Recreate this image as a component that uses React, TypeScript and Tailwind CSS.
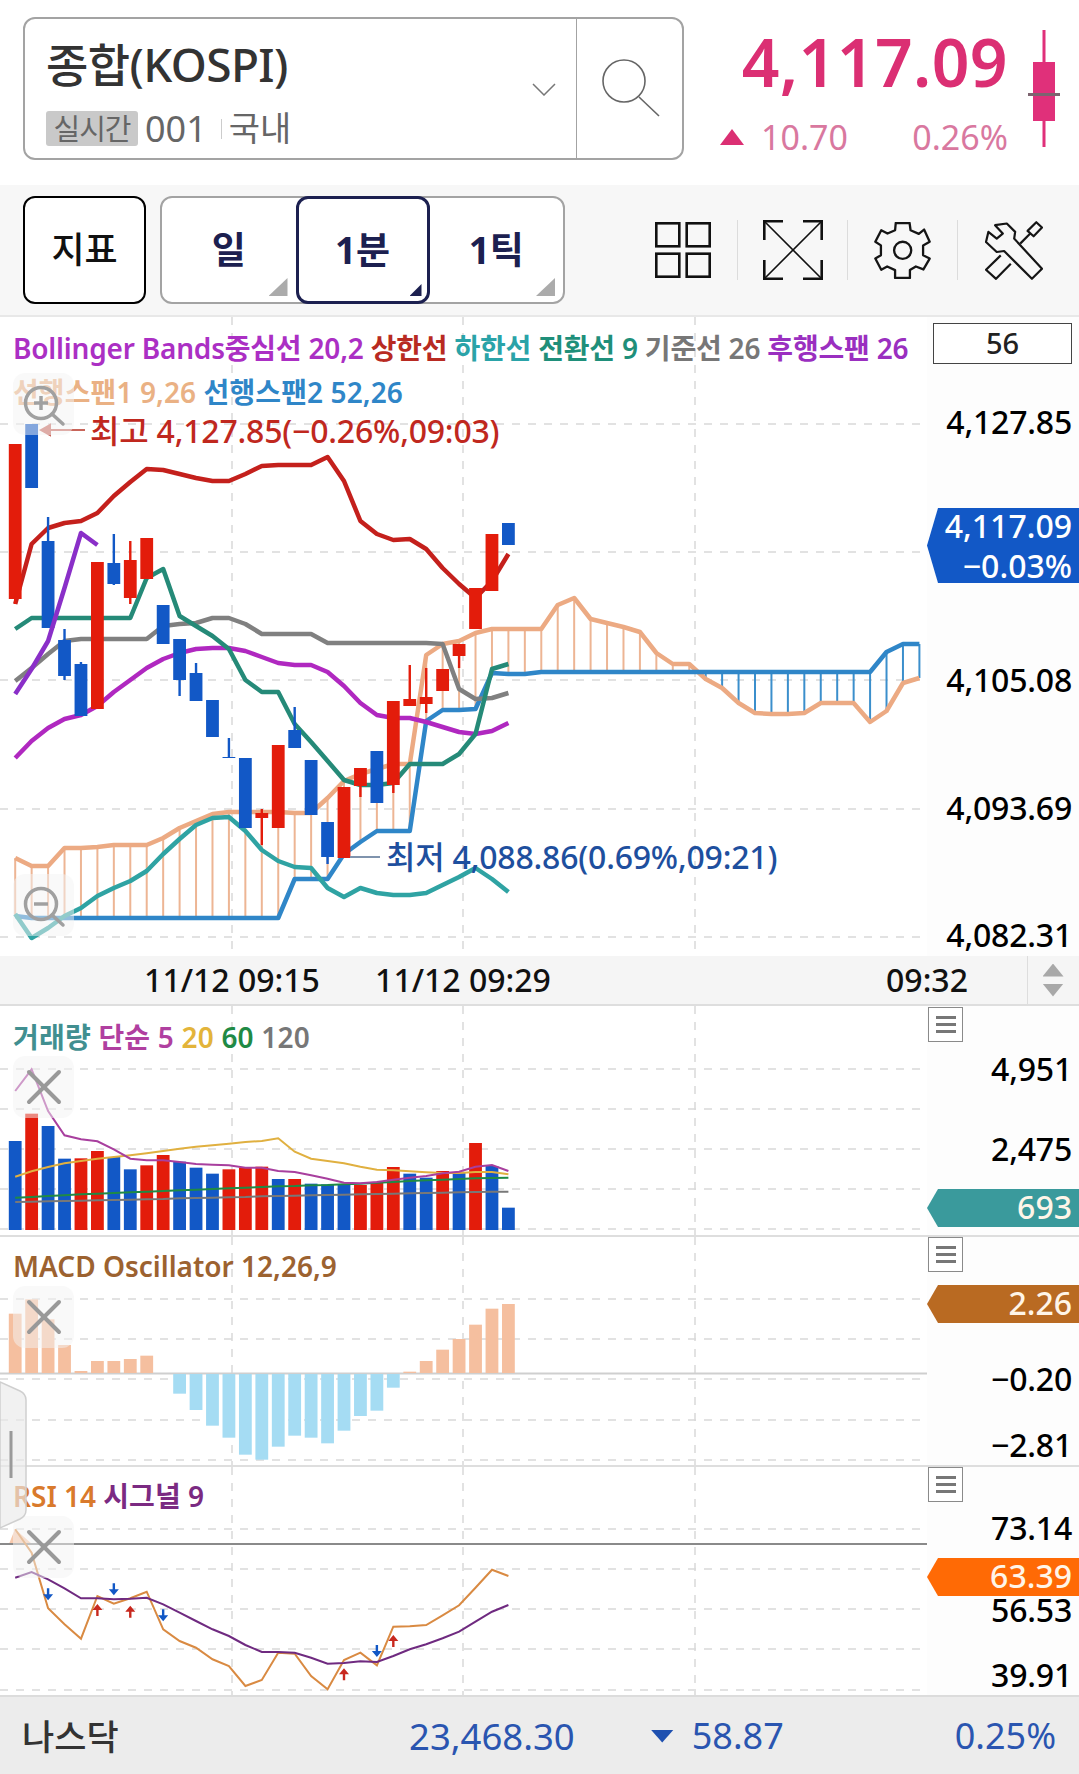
const RED = "#e31c0b";
const BLUE = "#1258c6";
const X = (i: number) => 15.2 + 16.44 * i;

// zoom-space y -> page y
const pts = (ys: number[], f: (y: number) => number = (y) => y) =>
  ys.map((y, i) => `${X(i).toFixed(1)},${f(y).toFixed(1)}`).join(" ");

// [color, bodyTop, bodyBottom, wickTop, wickBottom]
const candles: [string, number, number, number, number][] = [
  [RED, 443, 598, 443, 603],
  [BLUE, 423, 487, 423, 487],
  [BLUE, 540, 627, 516, 627],
  [BLUE, 639, 675, 628, 679],
  [BLUE, 663, 715, 661, 715],
  [RED, 561, 708, 561, 708],
  [BLUE, 562, 583, 533, 584],
  [RED, 559, 597, 540, 603],
  [RED, 537, 578, 537, 578],
  [BLUE, 604, 643, 604, 643],
  [BLUE, 638, 679, 638, 695],
  [BLUE, 672, 700, 662, 700],
  [BLUE, 699, 736, 699, 736],
  [BLUE, 756, 757, 737, 757],
  [BLUE, 757, 827, 757, 827],
  [RED, 812, 817, 808, 844],
  [RED, 744, 827, 744, 827],
  [BLUE, 729, 747, 706, 747],
  [BLUE, 759, 814, 759, 814],
  [BLUE, 821, 856, 821, 863],
  [RED, 786, 857, 786, 857],
  [RED, 767, 785, 767, 796],
  [BLUE, 750, 802, 750, 802],
  [RED, 700, 784, 700, 792],
  [RED, 698, 705, 664, 705],
  [RED, 696, 703, 667, 712],
  [RED, 668, 690, 668, 690],
  [RED, 643, 655, 643, 667],
  [RED, 587, 628, 587, 628],
  [RED, 533, 590, 533, 590],
  [BLUE, 522, 544, 522, 544],
];

const upper = [603, 543, 527, 522, 520, 512, 495, 481, 468, 469, 473, 477, 480, 480, 473, 465, 464, 464, 464, 456, 480, 520, 533, 539, 538, 548, 567, 583, 597, 580, 553];
const lagging = [693, 668, 640, 587, 532, 544];
const middle = [757, 740, 727, 718, 714, 705, 691, 679, 667, 658, 652, 648, 647, 647, 650, 656, 662, 664, 664, 671, 685, 702, 714, 717, 717, 721, 726, 731, 733, 730, 722];
const conv = [628, 617, 617, 617, 617, 617, 617, 617, 577, 568, 615, 625, 635, 648, 679, 691, 691, 723, 741, 760, 779, 784, 784, 782, 763, 763, 763, 753, 733, 668, 663];
const base = [680, 667, 653, 640, 638, 638, 638, 638, 638, 625, 623, 622, 617, 617, 623, 633, 633, 633, 633, 642, 642, 642, 642, 642, 642, 642, 643, 688, 698, 697, 692];
const lower = [913, 937, 927, 915, 907, 895, 887, 880, 870, 853, 838, 824, 817, 816, 830, 849, 860, 866, 867, 887, 896, 887, 892, 894, 894, 892, 884, 876, 867, 878, 891];
const span1 = [857, 865, 865, 847, 847, 846, 844, 844, 844, 837, 827, 820, 813, 811, 811, 811, 811, 812, 812, 797, 780, 773, 768, 763, 763, 654, 643, 640, 632, 628, 628, 628, 628, 604, 597, 618, 622, 626, 631, 652, 663, 663, 678, 687, 702, 712, 713, 713, 712, 702, 702, 702, 721, 710, 682, 677];
const span2 = [915, 917, 917, 917, 917, 917, 917, 917, 917, 917, 917, 917, 917, 917, 917, 917, 917, 878, 878, 878, 853, 841, 830, 830, 830, 720, 709, 709, 708, 672, 673, 673, 671, 671, 671, 671, 671, 671, 671, 671, 671, 671, 671, 671, 671, 671, 671, 671, 671, 671, 671, 671, 671, 651, 643, 643];

const volTops = [420, 338, 375, 473, 472, 450, 468, 505, 493, 462, 482, 500, 518, 505, 500, 497, 534, 534, 548, 550, 552, 552, 544, 498, 518, 530, 510, 515, 426, 495, 620];
const volUp = [1, 4, 5, 8, 9, 13, 14, 15, 17, 21, 22, 23, 26, 28];
const volPink = [270, 205, 330, 403, 415, 421, 445, 473, 478, 478, 483, 489, 491, 493, 500, 500, 510, 513, 523, 533, 545, 547, 543, 536, 530, 525, 517, 512, 497, 492, 510];
const volYellow = [527, 511, 498, 487, 480, 473, 468, 463, 457, 450, 443, 437, 433, 428, 423, 420, 412, 452, 473, 480, 487, 497, 506, 508, 511, 514, 516, 516, 513, 513, 520];
const volGreen = [590, 588, 585, 583, 580, 578, 576, 574, 572, 570, 568, 566, 564, 562, 560, 558, 556, 555, 553, 552, 550, 548, 545, 543, 540, 538, 536, 534, 532, 531, 530];
const volGray = [603, 602, 601, 600, 599, 598, 597, 596, 595, 594, 592, 591, 590, 589, 588, 586, 585, 584, 583, 582, 581, 580, 579, 578, 577, 576, 575, 574, 573, 572, 572];

const macd = [218, 175, 235, 312, 390, 360, 360, 354, 344, 396, 458, 507, 554, 590, 641, 656, 617, 584, 590, 607, 569, 525, 509, 440, 392, 360, 326, 294, 251, 203, 189];

const rsi = [175, 245, 412, 460, 503, 375, 398, 382, 362, 475, 510, 530, 565, 585, 645, 627, 545, 548, 615, 655, 567, 545, 583, 467, 466, 462, 433, 403, 350, 296, 315];
const signal = [320, 303, 325, 352, 382, 382, 385, 383, 380, 400, 425, 450, 475, 495, 522, 543, 543, 545, 560, 578, 576, 571, 573, 555, 535, 520, 502, 482, 452, 422, 402];
const rsiArrows: [number, number, boolean][] = [
  [2, 370, false],
  [6, 355, false],
  [9, 433, false],
  [22, 540, false],
  [5, 417, true],
  [7, 422, true],
  [20, 610, true],
  [23, 510, true],
];

const GridLines = ({ top, h, ys }: { top: number; h: number; ys: number[] }) => (
  <g stroke="#d9d9d9" strokeWidth="1.5" strokeDasharray="8 8">
    {ys.map((y) => (
      <line key={y} x1="0" x2="927" y1={y} y2={y} />
    ))}
    {[232, 463, 695].map((x) => (
      <line key={x} x1={x} x2={x} y1={top} y2={top + h} />
    ))}
  </g>
);

const AxisLabel = ({ y, text }: { y: number; text: string }) => (
  <div
    className="absolute right-[7px] text-[32px] leading-[40px] font-medium tracking-[-0.2px] text-black"
    style={{ top: y - 22 }}
  >
    {text}
  </div>
);

const AxisBadge = ({ y, h, color, text }: { y: number; h: number; color: string; text: string }) => (
  <div
    className="absolute left-0 w-full flex items-center justify-end pb-[2px] pr-[7px] text-[32px] font-medium text-[#fff5e8] [clip-path:polygon(11px_0,100%_0,100%_100%,11px_100%,0_50%)]"
    style={{ top: y, height: h, backgroundColor: color }}
  >
    {text}
  </div>
);

const MenuBtn = ({ top = "top-0" }: { top?: string }) => (
  <div className={`absolute left-[1px] ${top} z-10 flex h-[35px] w-[35px] flex-col items-center justify-center gap-[4px] border border-[#8a8a8a] bg-white`}>
    <div className="h-[3px] w-[20px] bg-[#777]" />
    <div className="h-[3px] w-[20px] bg-[#777]" />
    <div className="h-[3px] w-[20px] bg-[#777]" />
  </div>
);

const CloseBtn = ({ top }: { top: string }) => (
  <div className={`absolute left-[13px] ${top} flex h-[62px] w-[61px] items-center justify-center rounded-xl bg-[#f4f4f4]/50`}>
    <svg width="36" height="36" viewBox="0 0 36 36" stroke="#999" strokeWidth="4" strokeLinecap="round">
      <line x1="3" y1="3" x2="33" y2="33" />
      <line x1="33" y1="3" x2="3" y2="33" />
    </svg>
  </div>
);

const ZoomBtn = ({ top, plus }: { top: string; plus?: boolean }) => (
  <div className={`absolute left-[13px] ${top} h-[62px] w-[61px] rounded-xl bg-[#f4f4f4]/50`}>
    <svg width="61" height="62" viewBox="0 0 61 62" fill="none" stroke="#a0a0a0" strokeWidth="3.5">
      <circle cx="28" cy="30" r="15.5" />
      <line x1="39" y1="41" x2="50" y2="51" strokeLinecap="round" />
      <line x1="21" y1="30" x2="35" y2="30" />
      {plus && <line x1="28" y1="23" x2="28" y2="37" />}
    </svg>
  </div>
);

const ToolTab = ({ label, active }: { label: string; active?: boolean }) => (
  <div
    className={
      active
        ? "relative flex h-[108px] w-[134px] items-center justify-center rounded-xl border-[3px] border-[#1c2050] bg-white"
        : "relative flex h-full w-[134px] items-center justify-center"
    }
  >
    <span className="text-[37px] font-bold text-[#1c2050]">{label}</span>
    {active ? (
      <div className="absolute bottom-[5px] right-[5px] h-[12px] w-[12px] bg-[#1c2050] [clip-path:polygon(100%_0,100%_100%,0_100%)]" />
    ) : (
      <div className="absolute bottom-[6px] right-[8px] h-[18px] w-[19px] bg-[#ababab] [clip-path:polygon(100%_0,100%_100%,0_100%)]" />
    )}
  </div>
);

export default function App() {
  return (
    <div className="relative h-[1774px] w-[1079px] overflow-hidden bg-white font-['Noto_Sans','Noto_Sans_CJK_KR',sans-serif]">
      {/* header */}
      <div className="flex h-[185px] pl-[23px] pt-[17px]">
        <div className="flex h-[143px] w-[661px] rounded-xl border-2 border-[#a3a3a3]">
          <div className="relative flex-1 pl-[21px] pt-[15px]">
            <div className="text-[46px] font-medium leading-[60px] tracking-[-0.6px] text-[#333]">종합(KOSPI)</div>
            <div className="mt-[17px] flex items-center text-[#666]">
              <span className="flex h-[35px] w-[92px] items-center justify-center rounded-[3px] bg-[#c9c9c9] text-[29px] tracking-[-1px]">실시간</span>
              <span className="ml-[7px] text-[36px] leading-[35px]">001</span>
              <span className="ml-[14px] h-[20px] w-px bg-[#ccc]" />
              <span className="ml-[7px] text-[34px] leading-[35px]">국내</span>
            </div>
            <svg className="absolute right-[20px] top-[64px]" width="24" height="13" viewBox="0 0 24 13" fill="none" stroke="#777" strokeWidth="1.5">
              <path d="M1 1 L12 12 L23 1" />
            </svg>
          </div>
          <div className="flex w-[106px] items-center justify-center border-l border-[#a3a3a3] pl-[5px]">
            <svg width="62" height="62" viewBox="0 0 62 62" fill="none" stroke="#666" strokeWidth="1.6">
              <circle cx="23" cy="23" r="21" />
              <line x1="38" y1="39" x2="58" y2="58" />
            </svg>
          </div>
        </div>
        <div className="ml-[36px] w-[288px] pt-[4px] text-right">
          <div className="text-[66px] font-semibold leading-[80px] tracking-[0.4px] text-[#db2f73]">4,117.09</div>
          <div className="mt-[11px] flex items-center text-[34px] leading-[50px] text-[#d9789f]">
            <span className="h-[16px] w-[24px] bg-[#db2f73] [clip-path:polygon(50%_0,100%_100%,0_100%)]" />
            <span className="ml-[17px]">10.70</span>
            <span className="ml-auto">0.26%</span>
          </div>
        </div>
        <div className="relative ml-[20px] h-[142px] w-[32px]">
          <svg width="32" height="120" viewBox="0 0 32 120" className="mt-[13px]">
            <rect x="14.5" y="0" width="3" height="117" fill="#e0307a" />
            <rect x="5" y="32" width="22" height="59" fill="#e0307a" />
            <rect x="0" y="63" width="32" height="3" fill="#7d6470" />
          </svg>
        </div>
      </div>

      {/* toolbar */}
      <div className="flex h-[132px] items-center border-b-2 border-[#e8e8e8] bg-[#f7f7f7] pl-[23px]">
        <div className="flex h-[108px] w-[123px] items-center justify-center rounded-xl border-2 border-black bg-white text-[36px] font-medium text-[#111]">지표</div>
        <div className="ml-[14px] flex h-[108px] w-[405px] rounded-xl border-2 border-[#a3a3a3] bg-white">
          <ToolTab label="일" />
          <div className="-my-[2px]">
            <ToolTab label="1분" active />
          </div>
          <ToolTab label="1틱" />
        </div>
        <svg className="ml-[90px]" width="56" height="56" viewBox="0 0 56 56" fill="none" stroke="#111" strokeWidth="2.6">
          <rect x="1.3" y="1.3" width="23" height="23" />
          <rect x="31.7" y="1.3" width="23" height="23" />
          <rect x="1.3" y="31.7" width="23" height="23" />
          <rect x="31.7" y="31.7" width="23" height="23" />
        </svg>
        <div className="ml-[26px] h-[60px] w-px bg-[#dcdcdc]" />
        <svg className="ml-[25px]" width="60" height="60" viewBox="0 0 60 60" fill="none" stroke="#111">
          <path strokeWidth="2.6" d="M20 1.3 H1.3 V20 M40 1.3 H58.7 V20 M1.3 40 V58.7 H20 M58.7 40 V58.7 H40" />
          <path strokeWidth="1.6" d="M1.3 1.3 L58.7 58.7 M58.7 1.3 L1.3 58.7" />
        </svg>
        <div className="ml-[24px] h-[60px] w-px bg-[#dcdcdc]" />
        <svg className="ml-[26px]" width="57" height="57" viewBox="42 37 171 173" fill="none" stroke="#151515" strokeWidth="7" strokeLinejoin="round">
          <path d="M107 40 H149 L152 62 L177 73 L193 60 L210 97 L190 108 V138 L210 148 L191 181 L168 172 L150 183 V207 H105 V183 L81 172 L63 182 L45 148 L62 138 V108 L45 97 L63 62 L82 72 L105 62 Z" />
          <circle cx="128" cy="123" r="26" />
        </svg>
        <div className="ml-[26px] h-[60px] w-px bg-[#dcdcdc]" />
        <svg className="ml-[27px]" width="58" height="59" viewBox="375 33 173 175" fill="none" stroke="#151515" strokeWidth="6.5" strokeLinejoin="round">
          <path d="M405 45 L440 40 L465 65 L462 85 L545 175 L515 205 L432 122 L410 125 L378 95 L385 65 L410 85 L428 70 Z" />
          <path d="M422 135 L378 178 L408 205 L452 160" />
          <path d="M480 100 L510 70" />
          <path d="M502 62 L528 36 L545 52 L520 78 Z" />
        </svg>
      </div>

      {/* price chart */}
      <div className="flex h-[639px]">
        <div className="relative w-[927px]">
          <svg className="absolute inset-0" width="927" height="639" viewBox="0 316 927 639">
            <GridLines top={316} h={639} ys={[423, 551, 679, 808, 936]} />
            {span1.map((y, i) => (
              <line key={i} x1={X(i)} x2={X(i)} y1={y} y2={span2[i]} stroke={i < 42 ? "#edb594" : "#3b8fcc"} strokeWidth="2" />
            ))}
            <polyline points={pts(span1)} fill="none" stroke="#ecaa83" strokeWidth="4.5" strokeLinejoin="round" />
            <polyline points={pts(span2)} fill="none" stroke="#2f86c8" strokeWidth="4.5" strokeLinejoin="round" />
            <polyline points={pts(upper)} fill="none" stroke="#c4201c" strokeWidth="4.5" strokeLinejoin="round" />
            <polyline points={pts(middle)} fill="none" stroke="#b028c0" strokeWidth="4.5" strokeLinejoin="round" />
            <polyline points={pts(lower)} fill="none" stroke="#2fa3a3" strokeWidth="4.5" strokeLinejoin="round" />
            <polyline points={pts(base)} fill="none" stroke="#808080" strokeWidth="4.5" strokeLinejoin="round" />
            <polyline points={pts(conv)} fill="none" stroke="#258a78" strokeWidth="4.5" strokeLinejoin="round" />
            {candles.map(([c, t, b, wt, wb], i) => (
              <g key={i} fill={c}>
                <rect x={X(i) - 1.2} y={wt} width="2.4" height={wb - wt} />
                <rect x={X(i) - 6.4} y={t} width="12.8" height={b - t} />
              </g>
            ))}
            <polyline points={pts(lagging)} fill="none" stroke="#8a2fc8" strokeWidth="4.5" strokeLinejoin="round" />
            <path d="M41 429 H85 M41 429 L50 424 V434 Z" stroke="#c8655a" strokeWidth="2" fill="#c8655a" />
            <path d="M350 856 H380" stroke="#7f93ad" strokeWidth="2" />
          </svg>
          <div className="absolute left-[13px] top-[13px] whitespace-nowrap text-[28px] font-semibold leading-[36px] tracking-[-0.2px]">
            <span className="text-[#ab2fc4]">Bollinger Bands중심선 20,2 </span>
            <span className="text-[#b82a22]">상한선 </span>
            <span className="text-[#2aa3a8]">하한선 </span>
            <span className="text-[#1f8f7a]">전환선 9 </span>
            <span className="text-[#777]">기준선 26 </span>
            <span className="text-[#9a2fc0]">후행스팬 26</span>
          </div>
          <div className="absolute left-[13px] top-[57px] whitespace-nowrap text-[28px] font-semibold leading-[36px] tracking-[0.1px]">
            <span className="text-[#eab184]">선행스팬1 9,26 </span>
            <span className="text-[#2f86c8]">선행스팬2 52,26</span>
          </div>
          <ZoomBtn top="top-[56px]" plus />
          <ZoomBtn top="top-[557px]" />
          <div className="absolute left-[90px] top-[94px] whitespace-nowrap text-[32px] font-medium leading-[40px] tracking-[-0.2px] text-[#c0281e]">최고 4,127.85(−0.26%,09:03)</div>
          <div className="absolute left-[386px] top-[520px] whitespace-nowrap text-[32px] font-medium leading-[40px] tracking-[-0.2px] text-[#1e4f9e]">최저 4,088.86(0.69%,09:21)</div>
        </div>
        <div className="relative w-[152px] overflow-hidden bg-[#fdfdfd]">
          <div className="absolute left-[6px] top-[6px] flex h-[41px] w-[139px] items-center justify-center border border-[#444] bg-white pb-[2px] text-[29px] font-medium text-[#222]">56</div>
          <AxisLabel y={107} text="4,127.85" />
          <AxisLabel y={365} text="4,105.08" />
          <AxisLabel y={493} text="4,093.69" />
          <AxisLabel y={620} text="4,082.31" />
          <div className="absolute left-0 top-[191px] flex h-[75px] w-full flex-col items-end justify-center bg-[#1258c6] pr-[7px] text-[32px] font-medium leading-[40px] text-white [clip-path:polygon(11px_0,100%_0,100%_100%,11px_100%,0_50%)]">
            <span>4,117.09</span>
            <span>−0.03%</span>
          </div>
        </div>
      </div>

      {/* time axis */}
      <div className="relative flex h-[50px] items-center border-b-2 border-[#dedede] bg-[#f5f5f5] text-[32px] font-medium text-[#111]">
        <span className="absolute left-[232px] -translate-x-1/2">11/12 09:15</span>
        <span className="absolute left-[463px] -translate-x-1/2">11/12 09:29</span>
        <span className="absolute left-[927px] -translate-x-1/2">09:32</span>
        <div className="ml-auto flex h-full w-[52px] flex-col items-center justify-center gap-[7px] border-l border-[#ddd] pr-[1px]">
          <div className="h-[13px] w-[21px] bg-[#a8a8a8] [clip-path:polygon(50%_0,100%_100%,0_100%)]" />
          <div className="h-[13px] w-[21px] bg-[#a8a8a8] [clip-path:polygon(0_0,100%_0,50%_100%)]" />
        </div>
      </div>

      {/* volume */}
      <div className="flex h-[229px]">
        <div className="relative w-[927px]">
          <svg className="absolute inset-0" width="927" height="229" viewBox="0 1005 927 229">
            <GridLines top={1005} h={229} ys={[1068, 1108, 1148, 1188, 1228]} />
            {volTops.map((t, i) => (
              <rect key={i} x={X(i) - 6.4} y={1000 + t / 3} width="12.8" height={229 - t / 3} fill={volUp.includes(i) ? RED : BLUE} />
            ))}
            <polyline points={pts(volGray, (y) => 1000 + y / 3)} fill="none" stroke="#787878" strokeWidth="2" />
            <polyline points={pts(volGreen, (y) => 1000 + y / 3)} fill="none" stroke="#1f8a45" strokeWidth="2" />
            <polyline points={pts(volYellow, (y) => 1000 + y / 3)} fill="none" stroke="#e0b040" strokeWidth="2" />
            <polyline points={pts(volPink, (y) => 1000 + y / 3)} fill="none" stroke="#a83f9e" strokeWidth="2" />
          </svg>
          <div className="absolute left-[13px] top-[13px] whitespace-nowrap text-[28px] font-semibold leading-[36px] tracking-[0.2px]">
            <span className="text-[#418f90]">거래량 </span>
            <span className="text-[#b03fa0]">단순 5 </span>
            <span className="text-[#e3b43a]">20 </span>
            <span className="text-[#1f8a45]">60 </span>
            <span className="text-[#777]">120</span>
          </div>
          <CloseBtn top="top-[50px]" />
        </div>
        <div className="relative w-[152px] overflow-hidden bg-[#fdfdfd]">
          <MenuBtn top="top-[1px]" />
          <AxisLabel y={65} text="4,951" />
          <AxisLabel y={145} text="2,475" />
          <AxisLabel y={208} text="0" />
          <AxisBadge y={183} h={38} color="#3a9a9c" text="693" />
        </div>
      </div>

      {/* macd */}
      <div className="flex h-[230px] border-t-2 border-[#dedede]">
        <div className="relative w-[927px]">
          <svg className="absolute inset-0" width="927" height="228" viewBox="0 1236 927 228">
            <GridLines top={1236} h={228} ys={[1298, 1338, 1378, 1419, 1459]} />
            <line x1="0" x2="927" y1="1372.5" y2="1372.5" stroke="#cfcfcf" strokeWidth="2" />
            {macd.map((t, i) => {
              const y = 1240 + t / 3;
              return t < 397 ? (
                <rect key={i} x={X(i) - 6.4} y={y} width="12.8" height={1372 - y} fill="#f5bf9f" />
              ) : (
                <rect key={i} x={X(i) - 6.4} y={1373} width="12.8" height={y - 1373} fill="#a5dcf3" />
              );
            })}
          </svg>
          <div className="absolute left-[13px] top-[11px] whitespace-nowrap text-[28px] font-semibold leading-[36px] tracking-[0px] text-[#9c6230]">MACD Oscillator 12,26,9</div>
          <CloseBtn top="top-[49px]" />
        </div>
        <div className="relative w-[152px] overflow-hidden bg-[#fdfdfd]">
          <MenuBtn />
          <AxisBadge y={48} h={38} color="#b96a22" text="2.26" />
          <AxisLabel y={144} text="−0.20" />
          <AxisLabel y={210} text="−2.81" />
        </div>
      </div>

      {/* rsi */}
      <div className="flex h-[230px] border-t-2 border-[#dedede]">
        <div className="relative w-[927px]">
          <svg className="absolute inset-0" width="927" height="228" viewBox="0 1466 927 228">
            <GridLines top={1466} h={228} ys={[1528, 1568, 1608, 1648, 1689]} />
            <polygon points="15,1528 9,1543 32,1543" fill="#f7c9ad" />
            <line x1="0" x2="927" y1="1543" y2="1543" stroke="#8a8a8a" strokeWidth="2" />
            <polyline points={pts(rsi, (y) => 1470 + y / 3)} fill="none" stroke="#d98a42" strokeWidth="2" />
            <polyline points={pts(signal, (y) => 1470 + y / 3)} fill="none" stroke="#6f2a80" strokeWidth="2" />
            {rsiArrows.map(([i, zy, up]) => {
              const y = 1470 + zy / 3;
              const s = up ? 1 : -1;
              return (
                <path
                  key={i}
                  d={`M${X(i)} ${y - 6 * s} L${X(i) + 5} ${y} H${X(i) + 1.2} V${y + 6 * s} H${X(i) - 1.2} V${y} H${X(i) - 5} Z`}
                  fill={up ? "#c8281e" : "#1258c6"}
                />
              );
            })}
          </svg>
          <div className="absolute left-[13px] top-[11px] whitespace-nowrap text-[28px] font-semibold leading-[36px] tracking-[0px]">
            <span className="text-[#d97a2c]">RSI 14 </span>
            <span className="text-[#7b2a82]">시그널 9</span>
          </div>
          <CloseBtn top="top-[49px]" />
        </div>
        <div className="relative w-[152px] overflow-hidden bg-[#fdfdfd]">
          <MenuBtn />
          <AxisLabel y={63} text="73.14" />
          <AxisLabel y={145} text="56.53" />
          <AxisLabel y={210} text="39.91" />
          <AxisBadge y={91} h={38} color="#ff6a05" text="63.39" />
        </div>
      </div>

      {/* footer */}
      <div className="flex h-[80px] items-center border-t-2 border-[#dcdcdc] bg-[#ececec] pl-[22px] text-[36px] leading-none text-[#2a55b0]">
        <span className="w-[387px] text-[35px] font-medium text-[#333]">나스닥</span>
        <span className="text-[36.5px]">23,468.30</span>
        <span className="ml-[76px] h-[13px] w-[23px] bg-[#1e50b0] [clip-path:polygon(0_0,100%_0,50%_100%)]" />
        <span className="ml-[18px]">58.87</span>
        <span className="ml-[171px]">0.25%</span>
      </div>

      {/* side handle */}
      <svg className="absolute left-0 top-[1380px]" width="27" height="150" viewBox="0 0 27 150">
        <path d="M0 2 L20 11 Q26 14 26 20 V130 Q26 136 20 139 L0 148 Z" fill="#e9e9e9" fillOpacity="0.65" stroke="#cfcfcf" strokeWidth="1.5" />
        <rect x="9.5" y="51" width="3" height="47" fill="#9a9a9a" />
      </svg>
    </div>
  );
}
